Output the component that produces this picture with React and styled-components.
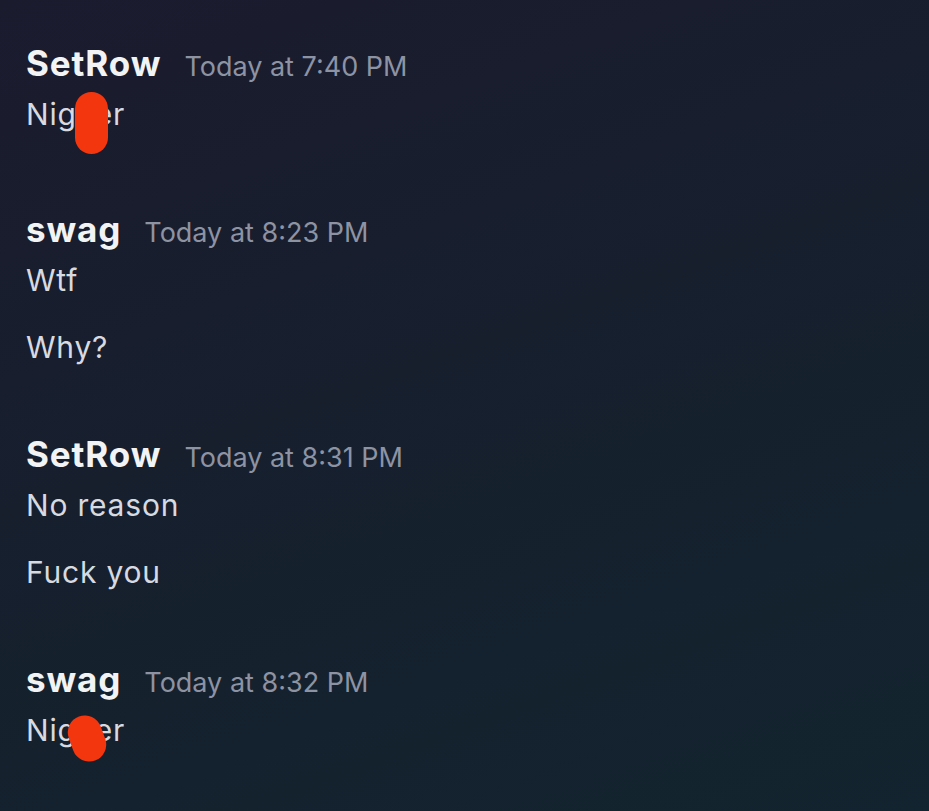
import React from "react";
import styled, { createGlobalStyle } from "styled-components";

const GlobalStyle = createGlobalStyle`
  html, body {
    margin: 0;
    padding: 0;
    height: 100%;
  }
  body {
    background: linear-gradient(160deg, #1b1b2e 0%, #171f2d 45%, #12242f 100%);
    font-family: "Inter", "Noto Sans", sans-serif;
    -webkit-font-smoothing: antialiased;
  }
`;

const Chat = styled.main`
  width: 929px;
  height: 811px;
  box-sizing: border-box;
  padding: 39px 26px 0;
  display: flex;
  flex-direction: column;
  gap: 63px;
  overflow: hidden;
`;

const Group = styled.section`
  display: flex;
  flex-direction: column;
  margin-bottom: ${p => p.$after || 0}px;
`;

const Header = styled.div`
  display: flex;
  align-items: baseline;
  gap: 23px;
  height: 55px;
  line-height: 48px;
`;

const Name = styled.span`
  color: #f2f3f5;
  font-size: 35px;
  font-weight: 700;
  letter-spacing: 0.9px;
`;

const Time = styled.span`
  color: #8d93a3;
  font-size: 27px;
  font-weight: 400;
`;

const Lines = styled.div`
  display: flex;
  flex-direction: column;
  gap: 27px;
`;

const Line = styled.p`
  margin: 0;
  color: #d7dae0;
  font-size: 30px;
  line-height: 40px;
  letter-spacing: 0.8px;
`;

// red marker blob that sat over part of the word in the screenshot
const Censor = styled.span`
  position: relative;
  display: inline-block;
  width: 18px;
  &::after {
    content: "";
    position: absolute;
    left: ${p => p.$left}px;
    top: ${p => p.$top}px;
    width: ${p => p.$w}px;
    height: ${p => p.$h}px;
    border-radius: 999px;
    background: #f4360e;
    transform: rotate(${p => p.$rot}deg);
  }
`;

const messages = [
  { name: "SetRow", time: "Today at 7:40 PM", after: 8, lines: [{ censored: { left: -2, top: -2, w: 33, h: 62, rot: 0 } }] },
  { name: "swag", time: "Today at 8:23 PM", lines: ["Wtf", "Why?"] },
  { name: "SetRow", time: "Today at 8:31 PM", lines: ["No reason", "Fuck you"] },
  { name: "swag", time: "Today at 8:32 PM", lines: [{ censored: { left: -7, top: 5, w: 34, h: 47, rot: -20 } }] },
];

export default function App() {
  return (
    <>
      <GlobalStyle />
      <Chat>
        {messages.map((m, i) => (
          <Group key={i} $after={m.after}>
            <Header>
              <Name>{m.name}</Name>
              <Time>{m.time}</Time>
            </Header>
            <Lines>
              {m.lines.map((l, j) =>
                typeof l === "string" ? (
                  <Line key={j}>{l}</Line>
                ) : (
                  <Line key={j}>
                    Nig
                    <Censor
                      $left={l.censored.left}
                      $top={l.censored.top}
                      $w={l.censored.w}
                      $h={l.censored.h}
                      $rot={l.censored.rot}
                    >
                      &nbsp;
                    </Censor>
                    er
                  </Line>
                )
              )}
            </Lines>
          </Group>
        ))}
      </Chat>
    </>
  );
}
